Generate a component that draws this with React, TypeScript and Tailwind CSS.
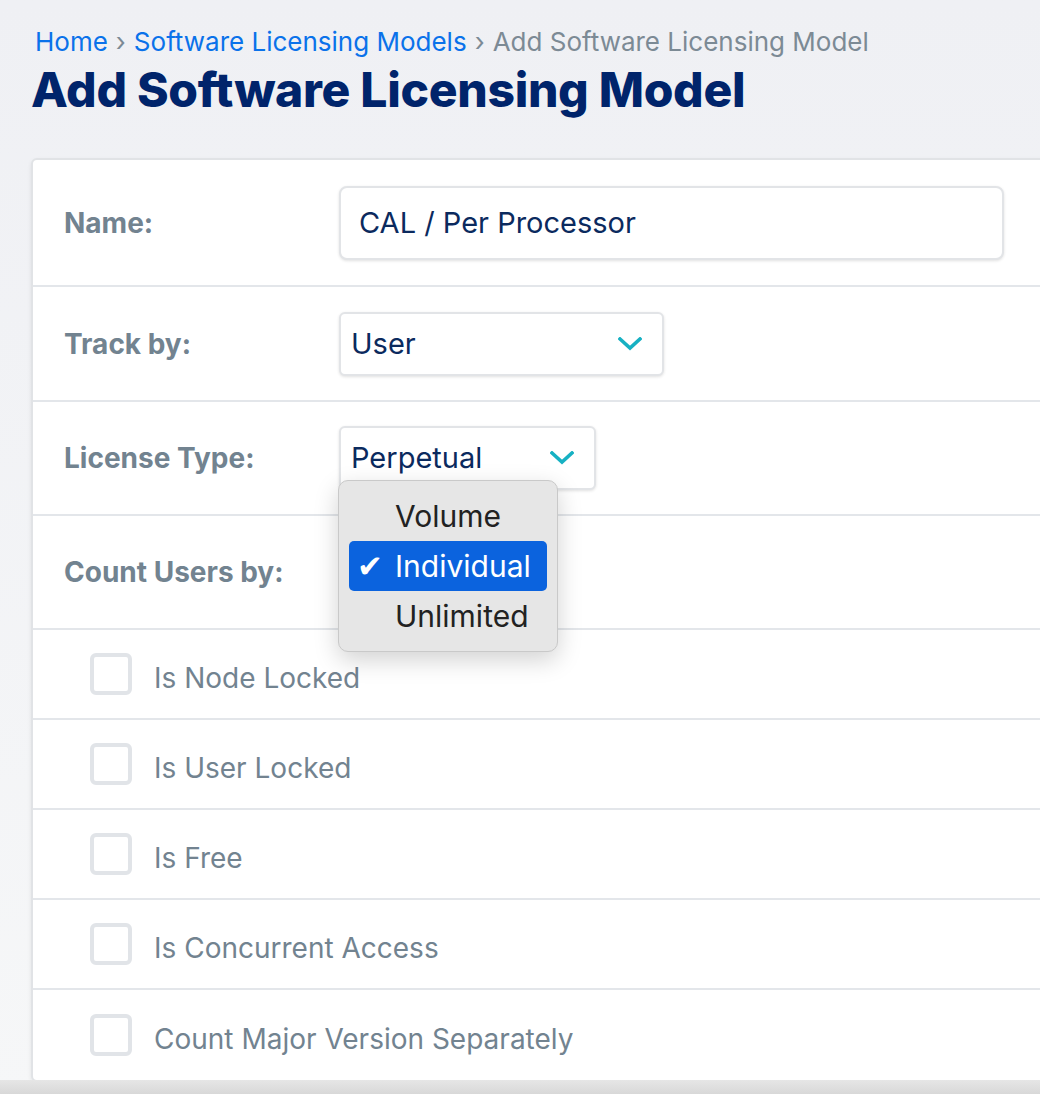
import React from 'react';

const font = { fontFamily: 'Inter, "Noto Sans", sans-serif' };

function Chevron() {
  return (
    <svg viewBox="0 0 24 14" className="h-[14px] w-[24px]" fill="none">
      <path d="M2 2 L12 11 L22 2" stroke="#17b1c3" strokeWidth="3.6" strokeLinecap="square" />
    </svg>
  );
}

function Select({ value, width }: { value: string; width: string }) {
  return (
    <div
      className={`flex h-[64px] items-center justify-between rounded-[6px] border-2 border-[#e2e4e7] bg-white pl-[10px] pr-[20px] shadow-[0_1px_3px_rgba(0,0,0,0.12)] ${width}`}
    >
      <span className="text-[29px] text-[#0b2a5e]">{value}</span>
      <Chevron />
    </div>
  );
}

function FieldRow({ label, children, h }: { label: string; children?: React.ReactNode; h: string }) {
  return (
    <div className={`flex items-center border-b-2 border-[#e3e6ea] ${h}`}>
      <div className="w-[306px] pl-[31px] text-[28px] font-bold text-[#728390]">{label}</div>
      {children}
    </div>
  );
}

function CheckRow({ label, last }: { label: string; last?: boolean }) {
  return (
    <div className={`flex h-[90px] items-center gap-[22px] pl-[57px] ${last ? '' : 'border-b-2 border-[#e3e6ea]'}`}>
      <span className="h-[42px] w-[42px] rounded-[6px] border-[4px] border-[#e1e4e8] bg-white" />
      <span className="pt-[8px] text-[28px] text-[#728390]">{label}</span>
    </div>
  );
}

export default function App() {
  return (
    <div className="relative h-[1094px] w-[1040px] overflow-hidden bg-gradient-to-b from-[#eff0f4] to-[#f6f7f8]" style={font}>
      <div className="pl-[35px] pt-[26px] text-[26px] leading-[32px]">
        <span className="text-[#0a72ea]">Home</span>
        <span className="mx-[8px] text-[#7c8a95]">›</span>
        <span className="text-[#0a72ea]">Software Licensing Models</span>
        <span className="mx-[8px] text-[#7c8a95]">›</span>
        <span className="text-[#7c8a95]">Add Software Licensing Model</span>
      </div>
      <h1 className="pl-[31px] pt-[2px] text-[48px] font-extrabold leading-[60px] tracking-[-0.3px] text-[#00246b]">
        Add Software Licensing Model
      </h1>

      <div className="ml-[31px] mt-[38px] w-[1040px] rounded-[6px] border-2 border-[#e1e3e6] bg-white shadow-[0_2px_4px_rgba(0,0,0,0.08)]">
        <FieldRow label="Name:" h="h-[127px]">
          <div className="flex h-[74px] w-[665px] items-center rounded-[8px] border-2 border-[#e2e4e7] bg-white pl-[18px] shadow-[0_1px_3px_rgba(0,0,0,0.12)]">
            <span className="text-[29px] text-[#0b2a5e]">CAL / Per Processor</span>
          </div>
        </FieldRow>
        <FieldRow label="Track by:" h="h-[115px]">
          <Select value="User" width="w-[325px]" />
        </FieldRow>
        <FieldRow label="License Type:" h="h-[114px]">
          <Select value="Perpetual" width="w-[257px]" />
        </FieldRow>
        <FieldRow label="Count Users by:" h="h-[114px]" />
        <CheckRow label="Is Node Locked" />
        <CheckRow label="Is User Locked" />
        <CheckRow label="Is Free" />
        <CheckRow label="Is Concurrent Access" />
        <CheckRow label="Count Major Version Separately" last />
      </div>

      <div className="absolute bottom-0 left-0 h-[14px] w-full bg-gradient-to-b from-[#e6e6e6] to-[#d8d8d8]" />

      <div
        className="absolute left-[338px] top-[480px] w-[220px] rounded-[10px] border border-[#c9c9c9] bg-[#e6e6e6] px-[10px] py-[10px] shadow-[0_8px_24px_rgba(0,0,0,0.18)]"
        style={{ fontFamily: 'Inter, "Liberation Sans", sans-serif' }}
      >
        {['Volume', 'Individual', 'Unlimited'].map((o) => (
          <div
            key={o}
            className={`flex h-[50px] items-center rounded-[5px] text-[30px] ${o === 'Individual' ? 'bg-[#0b63de] text-white' : 'text-[#222]'}`}
          >
            <span className="w-[46px] pl-[8px] text-[31px] leading-none" style={{ fontFamily: '"DejaVu Sans", sans-serif' }}>
              {o === 'Individual' ? '✔' : ''}
            </span>
            <span>{o}</span>
          </div>
        ))}
      </div>
    </div>
  );
}
